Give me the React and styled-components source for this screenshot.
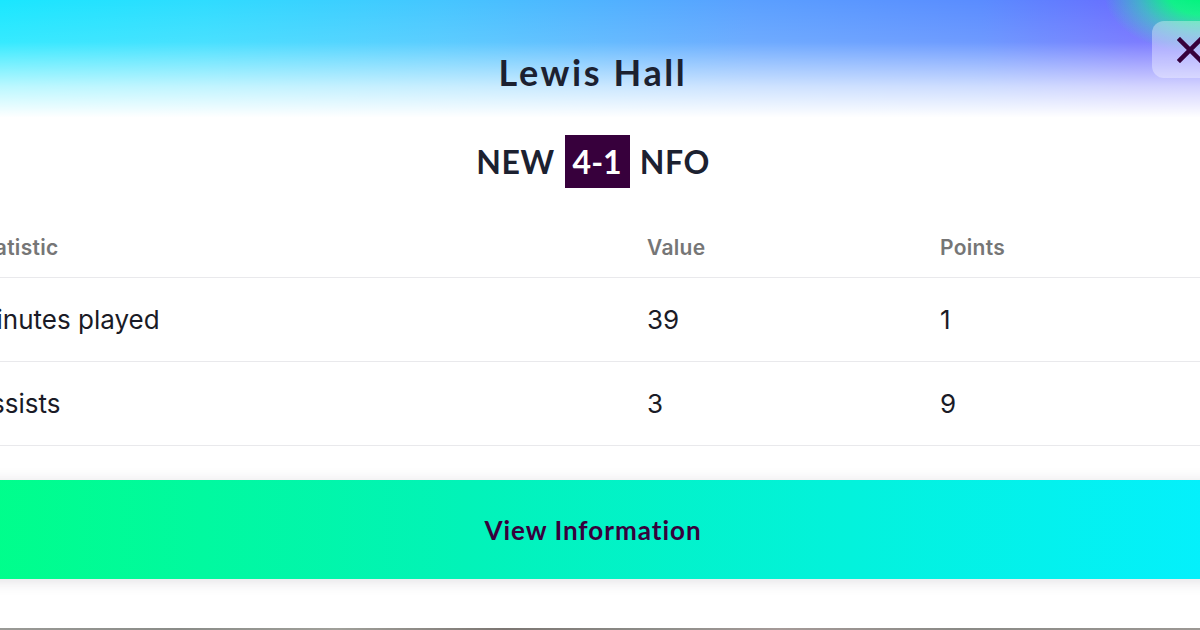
import React from "react";
import styled, { createGlobalStyle } from "styled-components";

const Global = createGlobalStyle`
  html, body { margin: 0; padding: 0; background: #ffffff; }
  body { width: 1200px; height: 630px; overflow: hidden; font-family: Inter, "Noto Sans", sans-serif; }
`;

const Page = styled.div`
  width: 1200px;
  height: 630px;
  overflow: hidden;
  display: flex;
  flex-direction: column;
  background: #fff;
`;

const Modal = styled.div`
  position: relative;
  width: 1294px;
  margin-left: -54px;
  flex: 1;
  display: flex;
  flex-direction: column;
  background: #fff;
`;

const Header = styled.header`
  height: 120px;
  box-sizing: border-box;
  padding-top: 47px;
  display: flex;
  justify-content: center;
  background:
    linear-gradient(to bottom, rgba(255,255,255,0) 0%, rgba(255,255,255,0.12) 35%, rgba(255,255,255,0.7) 72%, #fff 98%),
    radial-gradient(ellipse 100px 60px at 1258px -6px, #00f57a 0px, #10f08a 35px, rgba(40,220,170,0.6) 65px, rgba(100,110,255,0) 100px),
    linear-gradient(to right, #14eaff 0%, #2fdcff 20%, #45c6ff 38%, #5aa0ff 62%, #5a8cff 80%, #6a6cff 92%, #6e6aff 100%);
`;

const Title = styled.h1`
  margin: 0;
  font-family: Lato, "Noto Sans", sans-serif;
  font-weight: 700;
  font-size: 36px;
  line-height: 50px;
  color: #1c2130;
  letter-spacing: 2.6px;
`;

const CloseButton = styled.button`
  position: absolute;
  top: 21px;
  right: 13px;
  width: 75px;
  height: 57px;
  border: none;
  border-radius: 12px;
  background: rgba(255, 255, 255, 0.35);
  display: flex;
  align-items: center;
  justify-content: center;
  padding: 0;
`;

const Score = styled.div`
  margin-top: 15px;
  display: flex;
  justify-content: center;
  align-items: center;
  gap: 10px;
  font-family: Lato, "Noto Sans", sans-serif;
  font-weight: 700;
  font-size: 32px;
  letter-spacing: 0.6px;
  color: #1c2130;
`;

const Team = styled.span`
  line-height: 53px;
`;

const ScoreBox = styled.span`
  width: 65px;
  height: 53px;
  display: flex;
  align-items: center;
  justify-content: center;
  background: #37003c;
  color: #fff;
  letter-spacing: 0;
`;

const Table = styled.div`
  margin-top: 29px;
  display: flex;
  flex-direction: column;
`;

const Row = styled.div`
  display: grid;
  grid-template-columns: 674px 293px 1fr;
  padding-left: 27px;
  align-items: center;
  height: ${(p) => (p.$head ? "60px" : "83px")};
  border-bottom: 1px solid #e9e9ec;
`;

const HeadCell = styled.span`
  font-family: Inter, Roboto, sans-serif;
  font-weight: 600;
  font-size: 21px;
  letter-spacing: 0.3px;
  color: #767676;
`;

const Cell = styled.span`
  font-family: Inter, Roboto, sans-serif;
  font-weight: 400;
  font-size: 26px;
  color: #1a1b26;
`;

const ActionButton = styled.button`
  margin-top: 34px;
  height: 99px;
  border: none;
  background: linear-gradient(to right, #00ff87 0%, #02f3b8 40%, #03f2dc 70%, #04f0ff 100%);
  box-shadow: 0 2px 14px rgba(40, 30, 60, 0.14);
  font-family: Lato, "Noto Sans", sans-serif;
  font-weight: 700;
  font-size: 26px;
  letter-spacing: 1px;
  color: #37003c;
  cursor: pointer;
`;

const Spacer = styled.div`
  flex: 1;
`;

const BottomStrip = styled.div`
  height: 2px;
  background: linear-gradient(to right, #9a9a96 0%, #8a8c88 15%, #a0a09a 28%, #7c7672 42%, #8e8e8a 55%, #a59a98 65%, #8a8a86 80%, #9c9894 100%);
`;

const rows = [
  { stat: "Minutes played", value: "39", points: "1" },
  { stat: "Assists", value: "3", points: "9" },
];

export default function App() {
  return (
    <Page>
      <Global />
      <Modal>
        <Header>
          <Title>Lewis Hall</Title>
        </Header>
        <CloseButton aria-label="Close">
          <svg width="26" height="26" viewBox="0 0 26 26">
            <path d="M3 3 L23 23 M23 3 L3 23" stroke="#37003c" strokeWidth="4.5" strokeLinecap="square" />
          </svg>
        </CloseButton>
        <Score>
          <Team>NEW</Team>
          <ScoreBox>4-1</ScoreBox>
          <Team>NFO</Team>
        </Score>
        <Table>
          <Row $head>
            <HeadCell>Statistic</HeadCell>
            <HeadCell>Value</HeadCell>
            <HeadCell>Points</HeadCell>
          </Row>
          {rows.map((r) => (
            <Row key={r.stat}>
              <Cell>{r.stat}</Cell>
              <Cell>{r.value}</Cell>
              <Cell>{r.points}</Cell>
            </Row>
          ))}
        </Table>
        <ActionButton>View Information</ActionButton>
        <Spacer />
      </Modal>
      <BottomStrip />
    </Page>
  );
}
